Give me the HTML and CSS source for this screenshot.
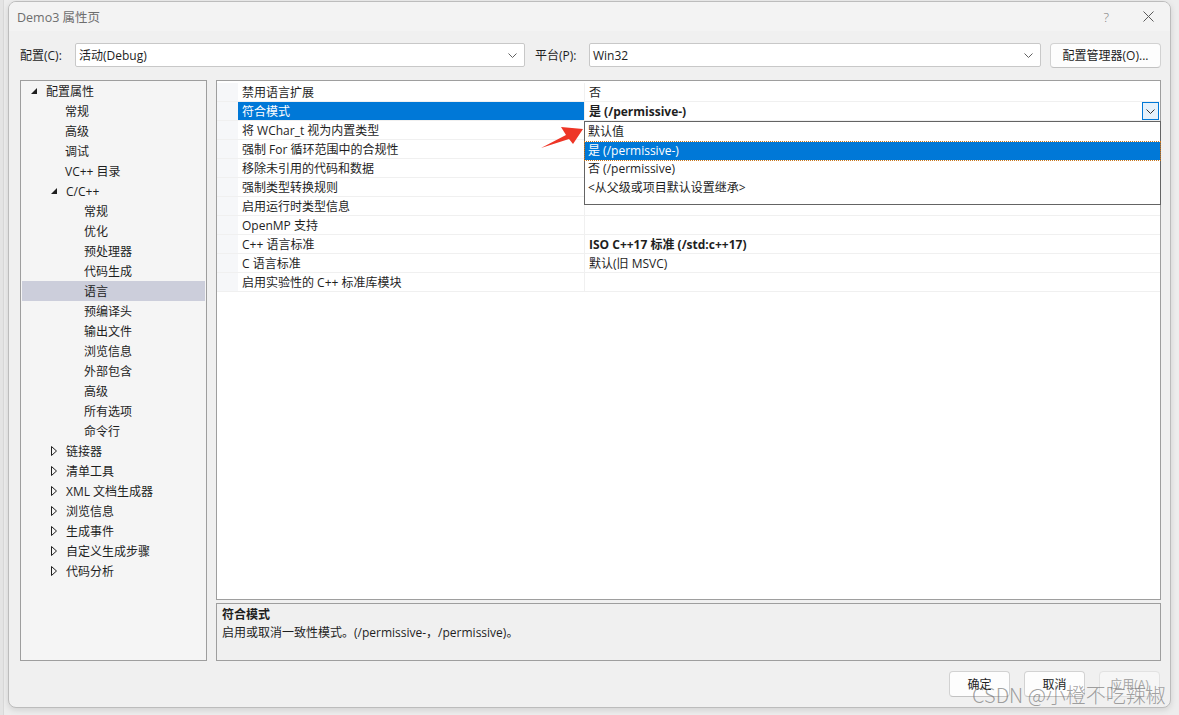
FILE: index.html
```html
<!DOCTYPE html>
<html lang="zh">
<head>
	<meta charset="utf-8">
	<title>Demo3 属性页</title>
	<link rel="stylesheet" href="styles.css">
</head>
<body>
<div class="desk">
	<div class="dialog">
		<div class="titlebar">
			<span class="title">Demo3 属性页</span>
			<span class="help">?</span>
			<span class="close"><svg width="11" height="11" viewBox="0 0 11 11"><path d="M0.5 0.5 L10.5 10.5 M10.5 0.5 L0.5 10.5" stroke="#5a5a5a" stroke-width="1" fill="none"/></svg></span>
		</div>

		<div class="config">
			<label class="lbl1">配置(C):</label>
			<div class="combo combo1"><span>活动(Debug)</span><svg width="9" height="5" viewBox="0 0 9 5"><path d="M0.5 0.5 L4.5 4.5 L8.5 0.5" stroke="#606060" fill="none"/></svg></div>
			<label class="lbl2">平台(P):</label>
			<div class="combo combo2"><span>Win32</span><svg width="9" height="5" viewBox="0 0 9 5"><path d="M0.5 0.5 L4.5 4.5 L8.5 0.5" stroke="#606060" fill="none"/></svg></div>
			<button class="btn mgr">配置管理器(O)...</button>
		</div>

		<div class="main">
			<div class="tree">
				<div class="node lv0"><span class="tw"><svg width="6" height="6" viewBox="0 0 6 6"><polygon points="6,0 6,6 0,6" fill="#1e1e1e"/></svg></span>配置属性</div>
				<div class="node lv1n">常规</div>
				<div class="node lv1n">高级</div>
				<div class="node lv1n">调试</div>
				<div class="node lv1n">VC++ 目录</div>
				<div class="node lv1"><span class="tw"><svg width="6" height="6" viewBox="0 0 6 6"><polygon points="6,0 6,6 0,6" fill="#1e1e1e"/></svg></span>C/C++</div>
				<div class="node lv2">常规</div>
				<div class="node lv2">优化</div>
				<div class="node lv2">预处理器</div>
				<div class="node lv2">代码生成</div>
				<div class="node lv2 sel">语言</div>
				<div class="node lv2">预编译头</div>
				<div class="node lv2">输出文件</div>
				<div class="node lv2">浏览信息</div>
				<div class="node lv2">外部包含</div>
				<div class="node lv2">高级</div>
				<div class="node lv2">所有选项</div>
				<div class="node lv2">命令行</div>
				<div class="node lv1"><span class="tw"><svg width="6" height="10" viewBox="0 0 6 10"><polygon points="0.5,0.5 5.5,5 0.5,9.5" fill="none" stroke="#1e1e1e"/></svg></span>链接器</div>
				<div class="node lv1"><span class="tw"><svg width="6" height="10" viewBox="0 0 6 10"><polygon points="0.5,0.5 5.5,5 0.5,9.5" fill="none" stroke="#1e1e1e"/></svg></span>清单工具</div>
				<div class="node lv1"><span class="tw"><svg width="6" height="10" viewBox="0 0 6 10"><polygon points="0.5,0.5 5.5,5 0.5,9.5" fill="none" stroke="#1e1e1e"/></svg></span>XML 文档生成器</div>
				<div class="node lv1"><span class="tw"><svg width="6" height="10" viewBox="0 0 6 10"><polygon points="0.5,0.5 5.5,5 0.5,9.5" fill="none" stroke="#1e1e1e"/></svg></span>浏览信息</div>
				<div class="node lv1"><span class="tw"><svg width="6" height="10" viewBox="0 0 6 10"><polygon points="0.5,0.5 5.5,5 0.5,9.5" fill="none" stroke="#1e1e1e"/></svg></span>生成事件</div>
				<div class="node lv1"><span class="tw"><svg width="6" height="10" viewBox="0 0 6 10"><polygon points="0.5,0.5 5.5,5 0.5,9.5" fill="none" stroke="#1e1e1e"/></svg></span>自定义生成步骤</div>
				<div class="node lv1"><span class="tw"><svg width="6" height="10" viewBox="0 0 6 10"><polygon points="0.5,0.5 5.5,5 0.5,9.5" fill="none" stroke="#1e1e1e"/></svg></span>代码分析</div>
			</div>

			<div class="right">
				<div class="grid">
					<div class="row"><span class="gut"></span><span class="name">禁用语言扩展</span><span class="val">否</span></div>
					<div class="row cur"><span class="gut"></span><span class="name">符合模式</span><span class="val bold">是 (/permissive-)<span class="ddbtn"><svg width="9" height="5" viewBox="0 0 9 5"><path d="M0.5 0.5 L4.5 4.5 L8.5 0.5" stroke="#333" fill="none"/></svg></span></span></div>
					<div class="row"><span class="gut"></span><span class="name">将 WChar_t 视为内置类型</span><span class="val"></span></div>
					<div class="row"><span class="gut"></span><span class="name">强制 For 循环范围中的合规性</span><span class="val"></span></div>
					<div class="row"><span class="gut"></span><span class="name">移除未引用的代码和数据</span><span class="val"></span></div>
					<div class="row"><span class="gut"></span><span class="name">强制类型转换规则</span><span class="val"></span></div>
					<div class="row"><span class="gut"></span><span class="name">启用运行时类型信息</span><span class="val"></span></div>
					<div class="row"><span class="gut"></span><span class="name">OpenMP 支持</span><span class="val"></span></div>
					<div class="row"><span class="gut"></span><span class="name">C++ 语言标准</span><span class="val bold">ISO C++17 标准 (/std:c++17)</span></div>
					<div class="row"><span class="gut"></span><span class="name">C 语言标准</span><span class="val">默认(旧 MSVC)</span></div>
					<div class="row"><span class="gut"></span><span class="name">启用实验性的 C++ 标准库模块</span><span class="val"></span></div>

					<div class="droplist">
						<div class="opt">默认值</div>
						<div class="opt on">是 (/permissive-)</div>
						<div class="opt">否 (/permissive)</div>
						<div class="opt">&lt;从父级或项目默认设置继承&gt;</div>
					</div>

					<svg class="arrow" width="56" height="32" viewBox="0 0 56 32"><polygon points="10,27 35,14 30,6 52,8 42,23 38,18" fill="#ee3526"/></svg>
				</div>

				<div class="desc">
					<div class="dtitle">符合模式</div>
					<div>启用或取消一致性模式。(/permissive-，/permissive)。</div>
				</div>
			</div>
		</div>

		<div class="buttons">
			<button class="btn">确定</button>
			<button class="btn">取消</button>
			<button class="btn off">应用(A)</button>
		</div>
	</div>

	<div class="watermark">CSDN @小橙不吃辣椒</div>
</div>
</body>
</html>
```

FILE: styles.css
```css
body {
	margin:0;
	background:#e8e8e8;
	font-family:"Open Sans", "Noto Sans CJK SC", sans-serif;
	font-size:12px;
	color:#1e1e1e;
}

.desk {
	position:relative;
	width:1179px;
	height:715px;
	overflow:hidden;
	background:linear-gradient(to right, #e4e4e4 0, #e4e4e4 3px, #d9d9d9 3px, #d9d9d9 4px, #ededed 4px);
}

/* ----------- dialog ----------- */
.dialog {
	margin:1px 0 0 8px;
	width:1163px;
	height:707px;
	box-sizing:border-box;
	border:1px solid #bcbcbc;
	border-radius:8px;
	background:#f0f0f0;
	box-shadow:0 2px 6px rgba(0,0,0,0.12);
	overflow:hidden;
}

.titlebar {
	display:flex;
	align-items:center;
	height:29px;
	background:#f3f3f3;
}

.title {
	margin-left:8px;
	color:#6e6e6e;
	font-size:12.5px;
}

.help {
	margin-left:auto;
	color:#777;
	font-size:13px;
	font-weight:300;
}

.close {
	display:flex;
	margin:0 16px 0 34px;
}

/* ----------- config row ----------- */
.config {
	display:flex;
	align-items:center;
	padding:12px 0 0 11px;
	height:24px;
}

.config label {
	flex:none;
}

.lbl1 { width:55px; }
.lbl2 { width:54px; margin-left:10px; }

.combo {
	display:flex;
	align-items:center;
	justify-content:space-between;
	box-sizing:border-box;
	height:24px;
	padding:0 7px 0 3px;
	background:#fff;
	border:1px solid #c8c8c8;
	border-radius:2px;
}

.combo1 { width:450px; }
.combo2 { width:452px; }

.btn {
	font-family:inherit;
	font-size:12px;
	color:#1e1e1e;
	background:#fdfdfd;
	border:1px solid #d2d2d2;
	border-bottom-color:#c2c2c2;
	border-radius:4px;
	padding:0;
	height:26px;
}

.mgr {
	margin-left:9px;
	width:111px;
	height:25px;
}

/* ----------- main ----------- */
.main {
	display:flex;
	gap:9px;
	margin-top:13px;
	padding-left:11px;
	height:581px;
}

.tree {
	width:187px;
	box-sizing:border-box;
	border:1px solid #9e9e9e;
	background:#f5f5f5;
	padding:0 1px;
}

.node {
	display:flex;
	align-items:center;
	height:20px;
	white-space:nowrap;
}

.tw {
	display:flex;
	align-items:center;
	padding-left:4px;
	box-sizing:border-box;
	width:19px;
}

.lv0 { padding-left:5px; }
.lv1 { padding-left:25px; }
.lv1n { padding-left:43px; }
.lv2 { padding-left:62px; }

.sel { background:#cccedb; }

.right {
	display:flex;
	flex-direction:column;
	gap:3px;
	width:945px;
}

.grid {
	position:relative;
	height:520px;
	box-sizing:border-box;
	border:1px solid #9e9e9e;
	background:#fff;
	padding-top:2px;
}

.row {
	display:flex;
	height:19px;
	box-sizing:border-box;
	border-bottom:1px solid #f0f0f0;
}

.gut {
	width:21px;
	background:#f6f7f9;
}

.name {
	width:347px;
	padding-left:4px;
	box-sizing:border-box;
	border-right:1px solid #f0f0f0;
	line-height:19px;
	white-space:nowrap;
}

.val {
	position:relative;
	flex:1;
	padding-left:4px;
	line-height:19px;
	white-space:nowrap;
}

.bold { font-weight:bold; }

.cur .name {
	background:#0078d7;
	color:#fff;
}

.ddbtn {
	position:absolute;
	right:1px;
	top:0;
	width:17px;
	height:18px;
	box-sizing:border-box;
	border:1px solid #0078d7;
	background:#e5f1fb;
	display:flex;
	align-items:center;
	justify-content:center;
}

.droplist {
	position:absolute;
	left:367px;
	top:40px;
	width:577px;
	height:84px;
	box-sizing:border-box;
	border:1px solid #646464;
	background:#fff;
	padding-top:1px;
}

.opt {
	height:18.5px;
	line-height:18px;
	padding-left:3px;
	box-sizing:border-box;
	white-space:nowrap;
}

.opt.on {
	background:#0078d7;
	color:#fff;
	outline:1px dotted #c8781e;
}

.arrow {
	position:absolute;
	left:314px;
	top:40px;
}

.desc {
	height:58px;
	box-sizing:border-box;
	border:1px solid #9e9e9e;
	background:#f0f0f0;
	padding:2px 5px;
	line-height:18px;
}

.dtitle { font-weight:bold; }

/* ----------- buttons ----------- */
.buttons {
	display:flex;
	justify-content:flex-end;
	gap:14px;
	margin-top:10px;
	padding-right:10px;
}

.buttons .btn { width:61px; }

.btn.off {
	color:#a6a6a6;
	background:#f6f6f6;
	border-color:#e2e2e2;
}

.watermark {
	position:absolute;
	left:972px;
	top:680px;
	font-size:20px;
	font-weight:300;
	color:rgba(110,110,110,0.65);
	white-space:nowrap;
	font-family:"Noto Sans CJK SC", sans-serif;
}
```
